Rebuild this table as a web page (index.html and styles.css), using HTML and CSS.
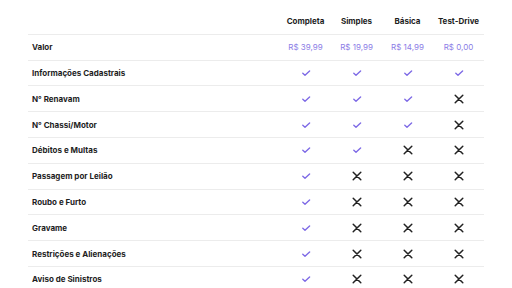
FILE: index.html
```html
<!DOCTYPE html>
<html lang="pt-BR">
<head>
<meta charset="utf-8">
<link rel="stylesheet" href="styles.css">
</head>
<body>
<svg class="defs" width="0" height="0">
  <defs>
    <symbol id="chk" viewBox="0 0 10 8"><path d="M1.8 4.3 L4 6.2 L8.6 2" fill="none" stroke="#7e6ae6" stroke-width="1.4" stroke-linecap="round" stroke-linejoin="round"/></symbol>
    <symbol id="crs" viewBox="0 0 10 10"><path d="M1.2 1.2 L8.8 8.8 M8.8 1.2 L1.2 8.8" fill="none" stroke="#222" stroke-width="1.5" stroke-linecap="round"/></symbol>
  </defs>
</svg>
<div class="wrap">
<table class="cmp">
  <colgroup><col class="c-name"><col class="c-plan"><col class="c-plan"><col class="c-plan"><col class="c-plan"></colgroup>
  <thead>
    <tr><th></th><th>Completa</th><th>Simples</th><th>Básica</th><th>Test-Drive</th></tr>
  </thead>
  <tbody>
    <tr><td class="name">Valor</td><td class="price">R$ 39,99</td><td class="price">R$ 19,99</td><td class="price">R$ 14,99</td><td class="price">R$ 0,00</td></tr>
    <tr><td class="name">Informações Cadastrais</td>
      <td><svg class="ic chk"><use href="#chk"/></svg></td><td><svg class="ic chk"><use href="#chk"/></svg></td><td><svg class="ic chk"><use href="#chk"/></svg></td><td><svg class="ic chk"><use href="#chk"/></svg></td></tr>
    <tr><td class="name">N° Renavam</td>
      <td><svg class="ic chk"><use href="#chk"/></svg></td><td><svg class="ic chk"><use href="#chk"/></svg></td><td><svg class="ic chk"><use href="#chk"/></svg></td><td><svg class="ic crs"><use href="#crs"/></svg></td></tr>
    <tr><td class="name">N° Chassi/Motor</td>
      <td><svg class="ic chk"><use href="#chk"/></svg></td><td><svg class="ic chk"><use href="#chk"/></svg></td><td><svg class="ic chk"><use href="#chk"/></svg></td><td><svg class="ic crs"><use href="#crs"/></svg></td></tr>
    <tr><td class="name">Débitos e Multas</td>
      <td><svg class="ic chk"><use href="#chk"/></svg></td><td><svg class="ic chk"><use href="#chk"/></svg></td><td><svg class="ic crs"><use href="#crs"/></svg></td><td><svg class="ic crs"><use href="#crs"/></svg></td></tr>
    <tr><td class="name">Passagem por Leilão</td>
      <td><svg class="ic chk"><use href="#chk"/></svg></td><td><svg class="ic crs"><use href="#crs"/></svg></td><td><svg class="ic crs"><use href="#crs"/></svg></td><td><svg class="ic crs"><use href="#crs"/></svg></td></tr>
    <tr><td class="name">Roubo e Furto</td>
      <td><svg class="ic chk"><use href="#chk"/></svg></td><td><svg class="ic crs"><use href="#crs"/></svg></td><td><svg class="ic crs"><use href="#crs"/></svg></td><td><svg class="ic crs"><use href="#crs"/></svg></td></tr>
    <tr><td class="name">Gravame</td>
      <td><svg class="ic chk"><use href="#chk"/></svg></td><td><svg class="ic crs"><use href="#crs"/></svg></td><td><svg class="ic crs"><use href="#crs"/></svg></td><td><svg class="ic crs"><use href="#crs"/></svg></td></tr>
    <tr><td class="name">Restrições e Alienações</td>
      <td><svg class="ic chk"><use href="#chk"/></svg></td><td><svg class="ic crs"><use href="#crs"/></svg></td><td><svg class="ic crs"><use href="#crs"/></svg></td><td><svg class="ic crs"><use href="#crs"/></svg></td></tr>
    <tr><td class="name">Aviso de Sinistros</td>
      <td><svg class="ic chk"><use href="#chk"/></svg></td><td><svg class="ic crs"><use href="#crs"/></svg></td><td><svg class="ic crs"><use href="#crs"/></svg></td><td><svg class="ic crs"><use href="#crs"/></svg></td></tr>
  </tbody>
</table>
</div>
</body>
</html>
```
FILE: styles.css
```css
html, body { margin: 0; padding: 0; background: #fff; }
body { font-family: Inter, "Noto Sans", "Liberation Sans", sans-serif; color: #222; }
.defs { position: absolute; width: 0; height: 0; overflow: hidden; }
.wrap { padding: 8px 28px 0 28px; }
.cmp { width: 456px; border-collapse: collapse; table-layout: fixed; }
.c-name { width: 252px; }
.c-plan { width: 51px; }
.cmp th { height: 25.8px; padding: 0; font-size: 8px; font-weight: 700; text-align: center; border-bottom: 1px solid #ececec; white-space: nowrap; color: #1e1e1e; }
.cmp td { height: 24.8px; padding: 0; border-bottom: 1px solid #ececec; text-align: center; vertical-align: middle; }
.cmp td.name { text-align: left; padding-left: 4px; font-size: 8px; font-weight: 700; color: #1e1e1e; }
.cmp td.price { font-size: 8px; font-weight: 400; color: #8b7ce6; white-space: nowrap; }
.ic { display: block; margin: 0 auto; }
.chk { width: 10px; height: 8px; }
.crs { width: 10px; height: 10px; }
```
